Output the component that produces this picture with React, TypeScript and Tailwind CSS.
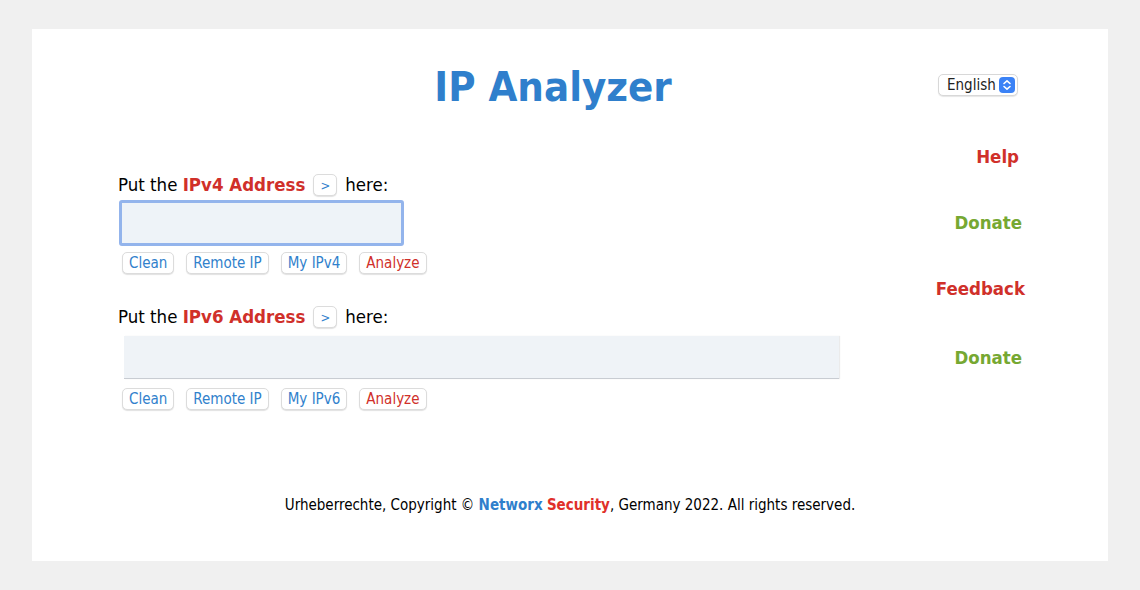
import { useState } from 'react';

const font = { fontFamily: '"DejaVu Sans Condensed", "DejaVu Sans", Verdana, sans-serif' };

function SmallButton({ label, tone = 'blue' }: { label: string; tone?: 'blue' | 'red' }) {
  return (
    <button
      type="button"
      className={`h-[22px] rounded-[5px] border border-[#dcdcdc] bg-white px-[6px] text-[15px] leading-none shadow-[0_1px_1px_rgba(0,0,0,0.12)] ${
        tone === 'red' ? 'text-[#d0302a]' : 'text-[#3181cc]'
      }`}
    >
      {label}
    </button>
  );
}

function ArrowButton() {
  return (
    <button
      type="button"
      className="mx-[8px] inline-flex h-[22px] w-[24px] items-center justify-center rounded-[5px] border border-[#dcdcdc] bg-white align-middle text-[13px] leading-none text-[#3181cc] shadow-[0_1px_1px_rgba(0,0,0,0.12)]"
    >
      &gt;
    </button>
  );
}

export default function App() {
  const [lang, setLang] = useState('English');
  const [v4, setV4] = useState('');
  const [v6, setV6] = useState('');

  return (
    <div className="min-h-screen bg-[#f0f0f0] px-[32px] py-[29px] text-black" style={font}>
      <div className="h-[532px] bg-white">
        {/* header */}
        <div className="flex items-center pt-[36px] pr-[93px]">
          <h1 className="flex-1 pl-[136px] text-center text-[41.5px] font-bold leading-[44px] text-[#2f7fcc]">
            IP Analyzer
          </h1>
          <div className="relative mb-[4px] -mr-[3px] flex h-[22px] w-[80px] items-center rounded-[5px] border border-[#d8d8d8] bg-white pl-[8px] text-[15px] text-[#222] shadow-[0_1px_1px_rgba(0,0,0,0.1)]">
            <select
              value={lang}
              onChange={(e) => setLang(e.target.value)}
              className="w-full appearance-none bg-transparent outline-none"
            >
              <option>English</option>
              <option>Deutsch</option>
            </select>
            <span className="pointer-events-none absolute right-[2px] top-[2px] flex h-[16px] w-[16px] items-center justify-center rounded-[4px] bg-[#3b82f6]">
              <svg width="10" height="12" viewBox="0 0 10 12" fill="none" stroke="white" strokeWidth="1.6" strokeLinecap="round" strokeLinejoin="round">
                <path d="M2 4.5 5 1.8 8 4.5" />
                <path d="M2 7.5 5 10.2 8 7.5" />
              </svg>
            </span>
          </div>
        </div>

        {/* body */}
        <div className="flex">
          <div className="flex-1 pl-[86px] pt-[63px]">
            <div className="flex items-center text-[18.5px] leading-[26px]">
              <span>Put the&nbsp;</span>
              <span className="font-bold text-[#d0302a]">IPv4 Address</span>
              <ArrowButton />
              <span>here:</span>
            </div>
            <input
              value={v4}
              onChange={(e) => setV4(e.target.value)}
              className="mt-[2px] ml-[1px] block h-[46px] w-[285px] rounded-[3px] border-[3px] border-[#93b4ec] bg-[#eef3f8] outline-none"
            />
            <div className="mt-[6px] ml-[4px] flex gap-[12px]">
              <SmallButton label="Clean" />
              <SmallButton label="Remote IP" />
              <SmallButton label="My IPv4" />
              <SmallButton label="Analyze" tone="red" />
            </div>

            <div className="mt-[30px] flex items-center text-[18.5px] leading-[26px]">
              <span>Put the&nbsp;</span>
              <span className="font-bold text-[#d0302a]">IPv6 Address</span>
              <ArrowButton />
              <span>here:</span>
            </div>
            <textarea
              value={v6}
              onChange={(e) => setV6(e.target.value)}
              className="mt-[6px] ml-[6px] block h-[43px] w-[715px] resize-none border-b border-[#c8ccd2] bg-[#eff3f7] shadow-[1px_0_1px_rgba(0,0,0,0.08)] outline-none"
            />
            <div className="mt-[9px] ml-[4px] flex gap-[12px]">
              <SmallButton label="Clean" />
              <SmallButton label="Remote IP" />
              <SmallButton label="My IPv6" />
              <SmallButton label="Analyze" tone="red" />
            </div>
          </div>

          <div className="flex w-[200px] flex-col items-end pr-[83px] pt-[35px] text-[18.5px] font-bold leading-[26px]">
            <a className="mr-[6px] text-[#d0302a]">Help</a>
            <a className="mt-[40px] mr-[3px] text-[#76a832]">Donate</a>
            <a className="mt-[40px] text-[#d0302a]">Feedback</a>
            <a className="mt-[43px] mr-[3px] text-[#76a832]">Donate</a>
          </div>
        </div>

        {/* footer */}
        <p className="mt-[85px] text-center text-[15px] leading-[20px]">
          Urheberrechte, Copyright © <span className="font-bold text-[#2f7fcc]">Networx</span>{' '}
          <span className="font-bold text-[#e0302a]">Security</span>, Germany 2022. All rights reserved.
        </p>
      </div>
    </div>
  );
}
